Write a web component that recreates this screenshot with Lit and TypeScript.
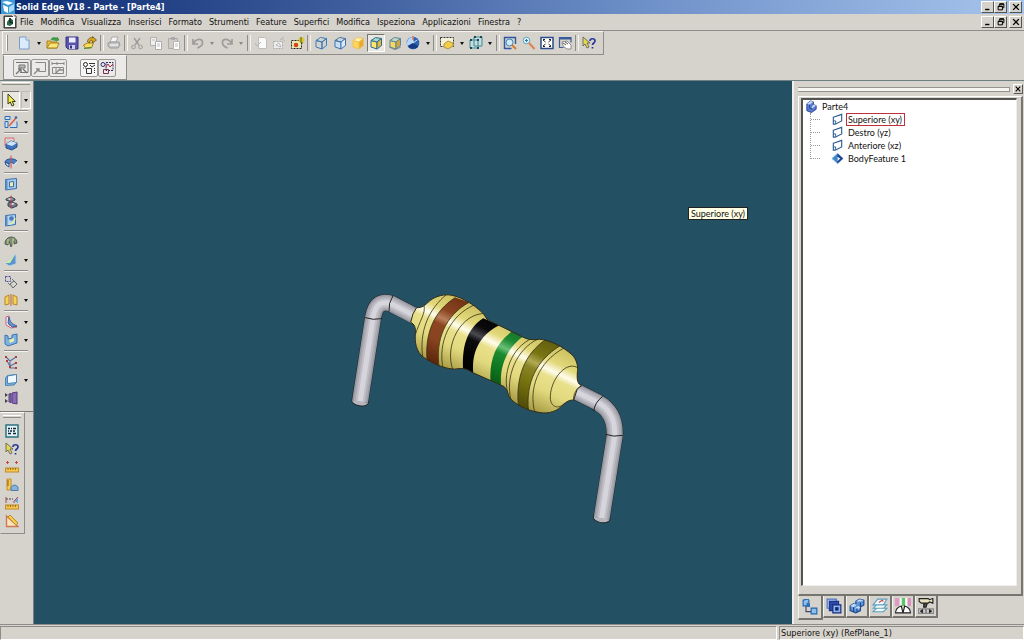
import { LitElement, html, css, svg, nothing } from "lit";
import { customElement, property } from "lit/decorators.js";

const cube = (front: string, top: string, side: string, line: string) => svg`
  <path d="M2 4.5 8 6v7L2 11z" fill=${front} stroke=${line}/>
  <path d="M2 4.5 6.500 1.500 12.500 2.500 8 6z" fill=${top} stroke=${line}/>
  <path d="M8 6l4.500-3.500v7L8 13z" fill=${side} stroke=${line}/>`;
const arrowHelp = svg`
  <path d="M1 1v9l2-2 2 4 2-1-2-4h3z" fill="#e3d94f" stroke="#555" stroke-width=".8"/>
  <path d="M8 5c0-3 5-3 5 0 0 2-2.500 2-2.500 4M10.500 11v1.500" fill="none" stroke="#28389a" stroke-width="1.700"/>`;
const ruler = (y: number) => svg`
  <rect x=".5" y=${y} width="13" height="4" fill="#f6c94c" stroke="#c28a28"/>
  <path d=${`M3 ${y}v2M5.500 ${y}v2M8 ${y}v2M10.500 ${y}v2`} stroke="#8a5a10" stroke-width=".8"/>`;
const undoPath = "M2 3v5h5M2 8C5 2 12 2 11.500 7c0 3-3 4-5 5";

const ICONS: Record<string, unknown> = {
  app: svg`<rect width="14" height="14" fill="#3c9bd6"/><path d="M1 2l5-1 6 2-5 2zM2 5l5 2v6l-4-2z" fill="#fff"/><path d="M8 7l5-3v6l-5 3z" fill="#a8dcf6"/>`,
  doc: svg`<path d="M1 1h8M1 1v12h12V1h-2" fill="none" stroke="#333"/><path d="M1.500 1.500h11v11h-11z" fill="#fff"/><path d="M1 1.500h9M1.500 1v12M1 12.500h12M12.500 3v10" stroke="#444"/><path d="M4 7l3-4 3 2v4l-3 2-3-1z" fill="#2a6a4a"/><path d="M7 3v4l3 1" stroke="#0c2c1c" fill="none" stroke-width="1.500"/>`,
  new: svg`<path d="M2.500 1h6.500l3 3v9H2.500z" fill="#dcebfb" stroke="#7c9cc8"/><path d="M9 1v3h3" fill="#fff" stroke="#7c9cc8"/>`,
  open: svg`<path d="M1 5h4l1 1h5v6H1z" fill="#e9c53f" stroke="#a8821a"/><path d="M1 12l3-5h9l-2 5z" fill="#fbe47a" stroke="#a8821a"/><path d="M5 4c1-3 4-3 6-1V1l2 3-3 1" fill="#43a047" stroke="#2d7d32" stroke-width=".6"/>`,
  save: svg`<path d="M1 1h12v12H3l-2-2z" fill="#5a55b0" stroke="#37327f"/><rect x="4" y="1.500" width="6.500" height="5" fill="#eef"/><rect x="4" y="9" width="6" height="4" fill="#cfd0ea"/><rect x="5" y="9.500" width="2" height="3" fill="#37327f"/>`,
  import: svg`<path d="M.500 9l4-2h6l-2 5h-6z" fill="#f7dc62" stroke="#a8821a"/><path d="M4.500 6c0-4 4-5 5-4V.500l4 3.500-4 3V5c-2-1-3 0-3 2z" fill="#d9a520" stroke="#6a5410" stroke-width=".8"/><path d="M1 12.500l7-1" stroke="#3c8a3c" stroke-width="1.200"/>`,
  print: svg`<path d="M5 1h6l-2 5H3z" fill="#f6f6f6" stroke="#aaa"/><path d="M1 7l4-1h7l1 3-2 3H3l-2-2z" fill="#c4c4c4" stroke="#9a9a9a"/><path d="M3 9h8" stroke="#fff"/>`,
  cut: svg`<path d="M4 2l5 7M10 2L5 9" stroke="#9a9a9a" stroke-width="1.300"/><circle cx="3.500" cy="11" r="1.800" fill="none" stroke="#9a9a9a"/><circle cx="10.500" cy="11" r="1.800" fill="none" stroke="#9a9a9a"/>`,
  copy: svg`<path d="M1.500 1.500h6v8h-6z" fill="#f0f0f0" stroke="#b0b0b0"/><path d="M6.500 5.500h6v8h-6z" fill="#fff" stroke="#aaa"/><path d="M8 8h3M8 10h3M3 4h3" stroke="#bbb"/>`,
  paste: svg`<path d="M1.500 2.500h9v10h-9z" fill="#d0cdc6" stroke="#aaa"/><path d="M4 1h4v3H4z" fill="#aaa"/><path d="M6.500 5.500h6v8h-6z" fill="#fff" stroke="#b5b5b5"/><path d="M8 8h3M8 10h3" stroke="#bbb"/>`,
  undo: svg`<path d=${undoPath} fill="none" stroke="#9c9c9c" stroke-width="1.700"/>`,
  redo: svg`<path d=${undoPath} transform="matrix(-1 0 0 1 14 0)" fill="none" stroke="#9c9c9c" stroke-width="1.700"/>`,
  props: svg`<path d="M4.500 1.500h6l2 2v9h-8z" fill="#fafafa" stroke="#bcbcbc"/><path d="M1 7l2 3 4-4" fill="none" stroke="#b4b4b4"/>`,
  link: svg`<path d="M1.500 5.500h9v7h-9z" fill="#ececec" stroke="#aaa" stroke-dasharray="2 1"/><path d="M4 9l3-2 2 4zM8 4l4-3M9 2l4 3" fill="#fff" stroke="#b5b5b5"/>`,
  update: svg`<path d="M.5 4.500h10v8H.5z" fill="#ece6b4" stroke="#222" stroke-dasharray="2 1"/><circle cx="5" cy="9" r="2.300" fill="#d2451e"/><circle cx="10.500" cy="4" r="3" fill="#dfc43a"/><path d="M10 1v6h2" stroke="#4d6a1a" fill="none"/>`,
  wire: cube("none", "none", "none", "#3e7cb8"),
  hidden: cube("#c8dcf0", "none", "#dce8f4", "#3e74b0"),
  shade: cube("#ffd65c", "#fff3a8", "#e8a92c", "#efc25a"),
  shadeEdge: cube("#ffe66a", "#a8d8c8", "#e0b840", "#2c6a94"),
  shadow: svg`<path d="M1 11l6 3 6-3" fill="#999" stroke="#999"/>${cube("#f4da60", "#c0dcb8", "#d4a840", "#5f83a2")}`,
  sphere: svg`<circle cx="7" cy="7" r="6.300" fill="#2d64b4"/><path d="M7 1v6L1.500 10A6.300 6.300 0 0 1 7 1z" fill="#b8d6f4"/><path d="M7 7l5.500 3A6.300 6.300 0 0 1 2 10z" fill="#173c86"/><path d="M7 7V1M7 7l4-3" stroke="#dce8f8"/><path d="M7 0v4" stroke="#e04a3a"/>`,
  fence: svg`<path d="M.5 1.500h13v9H.5z" fill="#f4f0d8" stroke="#333" stroke-dasharray="2 1"/><path d="M4 8l4-3 5 2v3l-5 3-4-2z" fill="#f2cf4a" stroke="#b5953c"/>`,
  box3d: svg`<path d="M1 4h8v8H1zM5 1h8v9H5z" fill="#bfe0e6" fill-opacity=".6" stroke="#3b8a94"/><path d="M1 4h2M8 4h2M1 12h2M8 12h2M5 1h2M11 1h2" stroke="#1a4a58" stroke-width="2"/>`,
  zoomArea: svg`<path d="M1 1.500h12M1.500 12.500h7M1.500 1v12M12.500 1v7" stroke="#2f55a4" stroke-width="1.400"/><circle cx="6.500" cy="6.500" r="3.500" fill="#cfeaf6" stroke="#3e86a8"/><path d="M9 9l4 4" stroke="#d97a2a" stroke-width="2"/>`,
  zoom: svg`<circle cx="4.500" cy="4.500" r="3.300" fill="#d8f0fa" stroke="#6aa4c0"/><path d="M3 4.500h3M4.500 3v3" stroke="#2a7a9a"/><path d="M7 7l5.500 6" stroke="#e0824a" stroke-width="2"/>`,
  fit: svg`<rect x="1" y="1.500" width="12" height="11" fill="#fff" stroke="#2c4c8c" stroke-width="1.500"/><path d="M3 4l2.500 2M11 4L8.500 6M3 10l2.500-2M11 10L8.500 8" stroke="#222"/><path d="M3 3.500h2M9 3.500h2M3 10.500h2M9 10.500h2" stroke="#222"/>`,
  pan: svg`<path d="M1 1.500h12v5M1.500 1v10.500h4" fill="none" stroke="#3a5a9a" stroke-width="1.200"/><path d="M1 2.500h12" stroke="#3a5a9a" stroke-width="2"/><path d="M4 6l5-1 4 4v4H9L5 10z" fill="#fff" stroke="#777" stroke-width=".8"/><path d="M5 7l3 2M7 6l3 2" stroke="#555"/>`,
  help: arrowHelp,
  t1: svg`<path d="M1 1.500h12v10H5" fill="none" stroke="#777"/><path d="M4 4h6v3H4z" fill="#bbb" stroke="#777"/><path d="M1 13l5-5M3 8h3v3M8 8l4 4" stroke="#777" stroke-width="1.400" fill="none"/>`,
  t2: svg`<path d="M2.500 1.500h10v9h-6" fill="none" stroke="#888"/><path d="M1 13l5-5M3 8h3v3" stroke="#888" stroke-width="1.400" fill="none"/>`,
  t3: svg`<path d="M1 2.500h12M1 1v3M13 1v3M6 1v3M1.500 6.500h11v6h-11zM5 6v6M9 6v3" fill="none" stroke="#888"/><path d="M5 12l3-3h4" stroke="#888" stroke-width="1.400" fill="none"/>`,
  t4: svg`<circle cx="3.500" cy="3.500" r="2" fill="none" stroke="#222"/><path d="M7 2.500h6M8 4l2 2 3-2M4.500 7.500h5v5h-5z" fill="none" stroke="#333"/><path d="M12.500 7v6M1 7h3" stroke="#333" stroke-dasharray="1 1"/>`,
  t5: svg`<circle cx="3" cy="3.500" r="2" fill="none" stroke="#2a2a7a"/><path d="M6 1.500h7v8H6z" fill="none" stroke="#2a2a5a" stroke-dasharray="2 1"/><path d="M6 6l2-3 2 3 3-3" fill="none" stroke="#b03040"/><path d="M3.500 8.500h5v4h-5z" fill="none" stroke="#7a3050"/>`,
  select: svg`<path d="M4 1v10l2.300-2L8 13l2-1-1.700-3.500h3z" fill="#f3ea50" stroke="#3c3c14"/>`,
  sketch: svg`<path d="M1 1.500h5v3H1zM1 6.500h3v6H1zM6 12.500h7v-6" fill="#c9e0f6" stroke="#2e6cb0"/><path d="M5 11l7-8" stroke="#d85a4a" stroke-width="1.300"/><circle cx="12" cy="2.500" r="1.300" fill="#2e6cb0"/>`,
  protrude: svg`<path d="M1 9V1h9v3" fill="none" stroke="#de6a78"/><path d="M2 7l5-3 6 2v4l-5 3-6-2z" fill="#3f74bc" stroke="#294f8c"/><path d="M2 7l5-3 6 2-5 3z" fill="#cfe4fa"/>`,
  revolve: svg`<path d="M1 7c1-4 10-4 12-1l-3 3c-2-2-4-2-5 0z" fill="#4b80c4" stroke="#27508e"/><path d="M1 7l4 2v3L2 10z" fill="#d8e8fa" stroke="#27508e"/><path d="M10 9l3-3v2l-3 3z" fill="#d8e8fa"/><path d="M7 .5v13" stroke="#d44a50"/>`,
  cutout: svg`<path d="M1.500 2.500l11-1v10l-11 1.500z" fill="#a4c8f0" stroke="#3b6fae"/><path d="M1.500 2.500l2 1v9l-2 .500z" fill="#5c8cc8"/><path d="M5.500 5l4-.5v5l-4 .5z" fill="#f2eea0" stroke="#3b6fae"/>`,
  revcut: svg`<path d="M2 4l5-2 4 2v1l-4 2-5-2zM4 8l4-1 5 2v2l-5 2-4-2z" fill="#6c7888" stroke="#3a4452"/><path d="M3 4l4-1 2 1-3 1zM6 9l3-1 2 1-3 1z" fill="#e8ecf0"/><path d="M7 .5v13" stroke="#c43e44"/>`,
  hole: svg`<path d="M1.500 2.500l10-1v10l-10 1.500z" fill="#b4d4f4" stroke="#3b6fae"/><path d="M1.500 2.500l2 1v9l-2 .500z" fill="#5c8cc8"/><circle cx="7.500" cy="5.500" r="2.300" fill="#4a78b8"/><path d="M5 11c4 0 5-2 6-6" stroke="#e8f09c" fill="none" stroke-width="1.500"/>`,
  round: svg`<path d="M1 9c0-9 12-9 12-1l-3 1V6l-3 6-2-6-1 4z" fill="#7d9180" stroke="#4c5c50"/><path d="M4 9V4M9 10V3" stroke="#e2cf78"/>`,
  draft: svg`<path d="M1 10L12 1v10L5 13z" fill="#5c94cc" stroke="#b8d4ea"/><path d="M1 10L11 2 6 10z" fill="#cfe9a8"/>`,
  pattern: svg`<path d="M1.500 1.500h5v5h-5z" fill="none" stroke="#4a4aa0" stroke-dasharray="2 1"/><path d="M6 9l4-3 3 3-4 4z" fill="#d6d6d0" stroke="#666"/><path d="M8 4l2 2M4 8l2 2" stroke="#777"/>`,
  mirror: svg`<path d="M1 4l4-2v9l-4 1zM9 2l4 2v8l-4-1z" fill="#f6d25a" stroke="#b98420"/><path d="M7 1v12" stroke="#c4602c"/>`,
  rib: svg`<path d="M2 2l3-1v9l8 2-6 1-5-3z" fill="#e6ecf6" stroke="#d06078"/><path d="M5 2c1 5 3 7 8 9l-5 1-4-4z" fill="#6c94cc" stroke="#3a629c"/>`,
  thin: svg`<path d="M1 2l3 1v3l4-1V2l5-1v9l-9 3-3-2z" fill="#7cb2e2" stroke="#3c74ac"/><path d="M5 7l5-2v3l-4 2z" fill="#e8f2a8"/>`,
  curve: svg`<path d="M2 2l4 4 6-4M3 6l3 5 6-3M6 6v7h6" fill="none" stroke="#5a6ea0" stroke-width="1.100"/><path d="M1 2h2M11 2h2M11 8h2M5 12h2M11 13h2M2 6h2" stroke="#b23c3c" stroke-width="2"/>`,
  plane: svg`<path d="M1.500 5l2-2.500 9-1v8L10 12l-8.500.500z" fill="#7fb0d8" stroke="#4c86b8"/><path d="M3.500 3l9-1.500v8l-9 1z" fill="#f0f8ff" stroke="#4c86b8"/>`,
  copyPart: svg`<path d="M8 2l5-1v12l-5-1zM5 3l2-.500v9L5 11z" fill="#8a6ab0" stroke="#553a80"/><path d="M1 2l3 2-3 2zM1 8l3 2-3 2z" fill="#444"/>`,
  grid: svg`<rect x="1" y="1" width="12" height="12" fill="#e4f4f6" stroke="#2d7080" stroke-width="1.500"/><path d="M3 4.500h2M6 4.500h1M8 4.500h3M3 7h1M5 7h2M8 7h2M3 9.500h3M8 9.500h3" stroke="#123" stroke-width="1.500"/>`,
  dist: svg`${ruler(8)}<path d="M1 2.500h3M10 2.500h3M2.500 1v3M11.500 1v3" stroke="#c44"/>`,
  angle: svg`<path d="M2 1h4v9l-1 2H2z" fill="#f6cc50" stroke="#c08c28"/><path d="M2 3h2M2 5h2M2 7h2" stroke="#8a5a10"/><path d="M6 12.500h7V9c-3-3-5-2-7 0z" fill="#88b4dc" stroke="#4a7cae"/>`,
  minDist: svg`${ruler(9)}<path d="M1 3h7" stroke="#444" stroke-dasharray="2 1"/><path d="M1 1v6M13 1L9 5v2" stroke="#b4404c" fill="none"/><path d="M9 5l4-3v5" fill="#6aa4dc"/>`,
  area: svg`<path d="M1.500 2v10.500H13z" fill="#f8e4c0" stroke="#d07850" stroke-width="1.400"/><path d="M5 1l8 8-2 2-8-8z" fill="#f6cc50" stroke="#c08c28"/>`,
  part: svg`<path d="M2 4l4-3 3 1v3l3 1v4l-5 3.500-5-2z" fill="#5a7cd0" stroke="#24408c"/><path d="M2 4l4-3 3 1-4 3zM7 8l2-3 3 1-4 3z" fill="#c8d8f8"/><path d="M5 5v4l3 1" fill="none" stroke="#24408c"/>`,
  refplane: svg`<path d="M2.500 4.500l9-3v7l-7 3.500h-2z" fill="#fff" stroke="#2c5a92" stroke-width="1.200"/><path d="M2.500 8.500h2.500v3" fill="none" stroke="#2c5a92"/>`,
  body: svg`<path d="M1 7l6-5.500L13 7l-6 5.500z" fill="#3f86c8" stroke="#86b4de"/><path d="M7 1.500V12.500L13 7z" fill="#1c3f92"/><path d="M7 5l3 2-3 3z" fill="#e8f2fc"/>`,
  tabTree: svg`<path d="M3.500 5v6H9" fill="none" stroke="#446"/><path d="M1 1l4-1 1 1v5H1zM8 8h5v5H8z" fill="#8cc0ee" stroke="#2464a8"/><path d="M4 3l3 1v3H4z" fill="#2f6fb8"/>`,
  tabLib: svg`<path d="M1 1h8v8H1z" fill="#a8c4ec" stroke="#5474b8"/><path d="M3 3h8v8H3z" fill="#2c48a4" stroke="#1a3490"/><path d="M6 6h7v7H6z" fill="#8eb2ec" stroke="#14287c"/><path d="M8 8h3v3H8z" fill="#102474"/>`,
  tabFam: svg`<path d="M1 7l3-2 2 1V3l3-2 4 1v4l-3 2v3l-4 2-5-2z" fill="#5e94d8" stroke="#1e488e"/><path d="M1 7l3-2 3 1-3 2zM6 3l3-2 4 1-3 1zM5 9l3-2 2 1-2 2z" fill="#c0dcfa"/><path d="M4 8v4M10 4v4M7 9v3" stroke="#1e488e"/>`,
  tabLayer: svg`<path d="M1 12l3-3h9l-3 3zM1 9l3-3h9l-3 3zM1 6l4-5h8l-3 5z" fill="#f4fafc" stroke="#5ea0c0"/><path d="M6 4l3-2 1 1" stroke="#c64a4a" fill="none"/>`,
  tabSensor: svg`<path d="M0 0h4v7H0z" fill="#e09ac4"/><path d="M4 0h3v7H4z" fill="#e8f6e8"/><path d="M6 0h3v7H6z" fill="#5cc46c"/><path d="M9 0h2v7H9z" fill="#fff"/><path d="M11 0h3v7h-3z" fill="#dc90bc"/><path d="M.500 13c0-3 2-5 5-6l1.500 6zM13.500 13c0-3-2-5-5-6L7 13z" fill="#fff" stroke="#222"/>`,
  tabPlay: svg`<path d="M1 .500h8l1 1 3-1v4l-3-1-1 1H3L1 3z" fill="#e8e0bc" stroke="#222"/><path d="M5 5h3l-1 3H5z" fill="#554" stroke="#222"/><path d="M.5 9.500h13v4H.5z" fill="#ccc" stroke="#888"/><path d="M4 10v3l-2-1.500zM10 10v3l2-1.500zM7 10v3" fill="#111" stroke="#111" stroke-width=".6"/>`,
  min: svg`<path d="M3 10.500h6" stroke="#000" stroke-width="2"/>`,
  restore: svg`<path d="M5 3h6v5H9M5 3v2M3 6h6v5H3z" fill="none" stroke="#000" stroke-width="1.400"/><path d="M5 2.500h6M3 6h6" stroke="#000" stroke-width="1.800"/>`,
  close: svg`<path d="M3 3l8 8M11 3l-8 8" stroke="#000" stroke-width="1.900"/>`,
};

@customElement("ui-icon")
class UiIcon extends LitElement {
  static styles = css`
    :host { display: block; width: 14px; height: 14px; flex: none; }
    svg { display: block; width: 100%; height: 100%; }
  `;
  @property() name = "";
  render() {
    return html`<svg viewBox="0 0 14 14" aria-hidden="true">${ICONS[this.name] ?? nothing}</svg>`;
  }
}

@customElement("resistor-view")
class ResistorView extends LitElement {
  static styles = css`
    :host { display: block; }
    svg { display: block; width: 100%; height: 100%; }
    .lead { fill: none; stroke-linejoin: round; }
    .l1 { stroke: #23282c; stroke-width: 17px; }
    .l2 { stroke: #98979f; stroke-width: 16px; }
    .l3 { stroke: #adacb4; stroke-width: 13px; }
    .l4 { stroke: #c0bfc7; stroke-width: 9px; }
    .l5 { stroke: #d6d5dc; stroke-width: 5px; }
    .ring { fill: none; stroke: #3c3818; stroke-width: 2.500px; }
    .seam { fill: none; stroke: #222; stroke-width: 1px; }
  `;
  private lead(d: string) {
    return svg`${[1, 2, 3, 4, 5].map((n) => svg`<path class=${`lead l${n}`} d=${d}/>`)}`;
  }
  private shade(id: string, stops: string[]) {
    return svg`<linearGradient id=${id} gradientUnits="userSpaceOnUse" x1="330" y1="60" x2="215" y2="300">
      ${stops.map((c, i) => svg`<stop offset=${[0.1, 0.36, 0.46, 0.53, 0.7, 0.95][i]} stop-color=${c}/>`)}
    </linearGradient>`;
  }
  render() {
    const body = "M32 110 39 85 50 66C66 68 76 58 90 45 110 30 135 25 155 29 190 36 222 58 246 80 258 90 256 100 268 105L370 155C385 163 400 164 420 161 450 164 490 183 516 207 532 222 536 245 533 262 531 285 535 297 546 301L533 310 522 344C505 343 496 353 485 363 465 383 435 386 412 380 380 374 350 358 334 342 322 330 326 314 312 303L215 260C200 249 185 247 165 251 135 251 95 233 70 215 48 198 44 170 46 145 48 125 43 116 32 110Z";
    return html`
      <svg viewBox="34 80 758 544" role="img" aria-label="Parte4">
        <defs>
          ${this.shade("skin", ["#c4b656", "#e2d87a", "#fffdee", "#e9e08c", "#e2d97e", "#a99c45"])}
          ${this.shade("brown", ["#6a2c10", "#8c4420", "#b9805c", "#8c4520", "#8a4422", "#5c260c"])}
          ${this.shade("black", ["#000", "#0a0a0c", "#4a4a50", "#0c0c0e", "#040404", "#000"])}
          ${this.shade("green", ["#0c5a18", "#1e8a34", "#6cc078", "#1c8a30", "#10761f", "#084c12"])}
          ${this.shade("olive", ["#5a560c", "#7a7614", "#b0aa54", "#8a8426", "#77720f", "#524e08"])}
          <clipPath id="body"><path d=${body}/></clipPath>
        </defs>
        <ellipse cx="360" cy="401" rx="8.500" ry="4.500" fill="#b8b7bf" stroke="#23282c" transform="rotate(9 360 401)"/>
        <ellipse cx="602" cy="518" rx="8.500" ry="4.500" fill="#b8b7bf" stroke="#23282c" transform="rotate(9 602 518)"/>
        ${this.lead("M360 401L373 317C375 304 381 300 391 303L416 316")}
        ${this.lead("M574 390L598 402C609 408 616 419 615 436L602 518")}
        <path class="seam" d="M365 317q8 3 17 1M393 295q-5 8-4 16M603 396q-8 6-9 15M606 434q8 3 17 1"/>
        <g transform="translate(400 285) scale(.3333)">
          <path d=${body} fill="url(#skin)"/>
          <g clip-path="url(#body)">
            <path d="M166 36C105 75 72 140 82 235L118 248C105 165 135 90 208 50Z" fill="url(#brown)"/>
            <path d="M250 98C200 130 185 185 190 256L221 270C213 205 235 150 300 118Z" fill="url(#black)"/>
            <path d="M336 138C285 175 268 225 272 292L304 306C298 240 322 185 374 150Z" fill="url(#green)"/>
            <path d="M438 162C375 205 347 275 356 362L386 376C378 290 410 225 482 180Z" fill="url(#olive)"/>
            <path class="ring" d="M142 25C85 70 56 140 69 220M166 36C105 75 72 140 82 235M208 50C135 90 105 165 118 248M223 58C150 90 112 170 130 252M258 84C185 80 130 180 160 256M72 60C78 82 58 108 47 145"/>
            <path class="ring" d="M398 158C335 185 305 265 326 332M416 160C350 190 315 275 334 346M438 162C375 205 347 275 356 362M482 180C410 225 378 290 386 376M492 188C415 230 385 310 406 384M533 246C495 225 448 290 452 342 456 370 482 370 496 352M546 301C530 308 520 328 522 344"/>
          </g>
          <path d=${body} fill="none" stroke="#2b2a18" stroke-width="3"/>
        </g>
      </svg>`;
  }
}

type Tool = { icon: string; label: string; menu?: boolean; off?: boolean; on?: boolean };
const t = (icon: string, label: string, flags = ""): Tool => ({
  icon, label, menu: flags.includes("m"), off: flags.includes("d"), on: flags.includes("p"),
});

const MENUS = ["File", "Modifica", "Visualizza", "Inserisci", "Formato", "Strumenti", "Feature", "Superfici", "Modifica", "Ispeziona", "Applicazioni", "Finestra", "?"];
const MAIN: Tool[][] = [
  [t("new", "Nuovo", "m"), t("open", "Apri"), t("save", "Salva"), t("import", "Importa")],
  [t("print", "Stampa", "d")],
  [t("cut", "Taglia", "d"), t("copy", "Copia", "d"), t("paste", "Incolla", "d")],
  [t("undo", "Annulla", "md"), t("redo", "Ripeti", "md")],
  [t("props", "Proprietà", "d"), t("link", "Collegamenti", "d"), t("update", "Aggiorna")],
  [t("wire", "Wireframe"), t("hidden", "Spigoli nascosti"), t("shade", "Ombreggiato"), t("shadeEdge", "Ombreggiato con spigoli", "p"), t("shadow", "Ombra"), t("sphere", "Viste", "m")],
  [t("fence", "Selezione", "m"), t("box3d", "Vista comune", "m")],
  [t("zoomArea", "Zoom area"), t("zoom", "Zoom"), t("fit", "Adatta"), t("pan", "Panoramica")],
  [t("help", "Guida rapida")],
];
const SIDE: Tool[][] = [
  [t("select", "Seleziona", "mp")],
  [t("sketch", "Schizzo", "m")],
  [t("protrude", "Protrusione"), t("revolve", "Rivoluzione", "m")],
  [t("cutout", "Scavo"), t("revcut", "Scavo di rivoluzione", "m"), t("hole", "Foro", "m")],
  [t("round", "Raccordo"), t("draft", "Sformo", "m")],
  [t("pattern", "Serie", "m"), t("mirror", "Specchio", "m")],
  [t("rib", "Nervatura", "m"), t("thin", "Spessore", "m")],
  [t("curve", "Curva"), t("plane", "Piano", "m"), t("copyPart", "Copia parte")],
];
const MEASURE = [t("grid", "Variabili"), t("help", "Guida"), t("dist", "Distanza"), t("angle", "Angolo"), t("minDist", "Distanza minima"), t("area", "Area")];
const TREE = [["refplane", "Superiore (xy)"], ["refplane", "Destro (yz)"], ["refplane", "Anteriore (xz)"], ["body", "BodyFeature 1"]];
const TABS = [["tabTree", "EdgeBar"], ["tabLib", "Libreria"], ["tabFam", "Famiglia"], ["tabLayer", "Livelli"], ["tabSensor", "Sensori"], ["tabPlay", "Riproduzione"]];

@customElement("app-root")
class AppRoot extends LitElement {
  static styles = css`
    :host {
      display: flex; flex-direction: column; height: 100vh; box-sizing: border-box; overflow: hidden;
      background: #d6d3cc; color: #111;
      font: 9px/12px "DejaVu Sans Condensed", "DejaVu Sans", sans-serif;
    }
    * { box-sizing: border-box; }
    button { font: inherit; color: inherit; border: 0; background: none; padding: 0; margin: 0; display: flex; align-items: center; justify-content: center; }
    ul { list-style: none; margin: 0; padding: 0; }
    .title { display: flex; align-items: center; height: 14px; flex: none; padding: 0 2px 0 1px; gap: 1px; color: #fff; background: linear-gradient(90deg, #0c2a72, #3f5f9e 35%, #6d8fc8 62%, #a6c4ec); }
    .title h1 { flex: 1; margin: 0; font: bold 9px/14px "DejaVu Sans Condensed", sans-serif; }
    .menubar { display: flex; align-items: center; height: 17px; flex: none; padding: 0 2px 0 3px; border-bottom: 1px solid #8e8c88; }
    .menus { display: flex; flex: 1; gap: 1px; }
    .menus button { padding: 0 3px; line-height: 16px; }
    .winbtns { display: flex; }
    .winbtns button, .x { width: 13px; height: 12px; background: #d6d3cc; border: 1px solid; border-color: #fff #555 #555 #fff; }
    .winbtns button:last-child { margin-left: 2px; }
    .winbtns ui-icon { width: 10px; height: 10px; }
    .bar { display: flex; align-items: center; align-self: flex-start; flex: none; height: 24px; border: 1px solid; border-color: #f6f5f2 #8e8c88 #8e8c88 #f6f5f2; }
    .main { width: 602px; max-width: 100%; margin-left: 2px; padding: 0 5px 0 3px; justify-content: space-between; }
    .grip { width: 2px; height: 16px; border-left: 1px solid #fff; border-right: 1px solid #8e8c88; margin-right: 7px; }
    .sep { width: 5px; height: 16px; display: flex; justify-content: center; }
    .sep::before { content: ""; width: 2px; border-left: 1px solid #8e8c88; border-right: 1px solid #f4f3f0; }
    .tool { width: 18px; height: 18px; flex: none; }
    .tool.on { background: #e9e7e2; border: 1px solid; border-color: #77756f #fff #fff #77756f; }
    .drop { width: 10px; height: 18px; flex: none; }
    .drop::before { content: ""; border: 2px solid transparent; border-top: 3px solid #111; border-bottom: 0; }
    .drop:disabled::before { border-top-color: #8b8985; }
    .ribbon { background: #ebeae9; margin-left: 3px; height: 25px; padding: 0 9px; width: 124px; border-left-color: #8e8c88; }
    .ribbon .tool { border: 1px solid #9a9895; border-radius: 2px; }
    .ribbon .tool.on { background: #f7f7f7; border-color: #9a9895; }
    .ribbon .gap { width: 13px; }
    .work { flex: 1; min-height: 0; display: flex; border-top: 1px solid #6f8084; }
    .left { width: 34px; flex: none; border-right: 1px solid #7a7f80; }
    .side { display: flex; flex-direction: column; padding: 1px 3px 4px 2px; border-bottom: 1px solid #77756f; }
    .hgrip { height: 3px; margin: 0 0 6px; border-top: 1px solid #fff; border-bottom: 1px solid #8e8c88; }
    .row { display: flex; }
    .row .drop { margin-left: 1px; }
    .row.on .drop { border: 1px solid; border-color: #bbb #fff #fff #bbb; }
    .hsep { height: 2px; margin: 1px 2px; border-top: 1px solid #8e8c88; border-bottom: 1px solid #f4f3f0; }
    .measure { width: 25px; padding: 2px 3px 3px 2px; border: 1px solid; border-color: #fff #8e8c88 #8e8c88 transparent; }
    .measure .hgrip { margin: 0 0 4px; }
    .canvas { flex: 1; min-width: 0; position: relative; background: #245064; }
    resistor-view { height: 100%; }
    .tip { position: absolute; left: 654px; top: 126px; padding: 0 2px; height: 13px; background: #ffffe6; border: 1px solid #222; white-space: nowrap; }
    .tip, .tree { font: 9px/11px Lato, "Liberation Sans", sans-serif; }
    .edge { width: 232px; flex: none; display: flex; flex-direction: column; padding: 1px 1px 4px 4px; border-left: 2px solid #f0efec; }
    .head { display: flex; align-items: center; gap: 3px; height: 14px; flex: none; }
    .head .lines { flex: 1; height: 5px; border: 1px solid #96948f; border-left: 0; background: #f6f5f2; }
    .x { width: 10px; height: 10px; }
    .x ui-icon { width: 8px; height: 8px; }
    .frame { flex: 1; min-height: 0; display: flex; padding: 1px 4px 8px 2px; border: 1px solid; border-width: 1px 2px 2px 1px; border-color: #fff #77756f #77756f #fff; }
    .tree { flex: 1; background: #fff; border: 1px solid; border-width: 2px 1px 1px 2px; border-color: #55534f #eee #eee #55534f; padding: 0 2px; }
    .node { display: flex; align-items: center; height: 13px; gap: 2px; }
    .node ui-icon { width: 13px; height: 13px; }
    .node span { padding: 0 2px 0 1px; border: 1px solid transparent; line-height: 11px; }
    .node span.hot { border-color: #c0303a; }
    .kids { margin-left: 5px; border-left: 1px dotted #999; height: 46px; }
    .kids .node::before { content: ""; width: 9px; border-top: 1px dotted #999; margin-right: 9px; }
    .tabs { display: flex; flex: none; height: 24px; }
    .tabs button { width: 23px; height: 22px; border-right: 2px solid #77756f; border-bottom: 2px solid #77756f; border-left: 1px solid #f4f3f0; }
    .tabs button.on { height: 24px; width: 25px; }
    .tabs ui-icon { width: 16px; height: 16px; }
    .status { display: flex; flex: none; height: 16px; gap: 2px; padding-top: 1px; border-top: 1px solid #8e8c88; }
    .pane { border: 1px solid; border-color: #8e8c88 #fff #fff #8e8c88; padding: 0 1px; line-height: 13px; }
    .pane.wide { flex: 1; }
    .pane.info { width: 245px; }
  `;

  private tool(x: Tool) {
    return html`<button class="tool ${x.on ? "on" : ""}" aria-label=${x.label} ?disabled=${x.off}><ui-icon name=${x.icon}></ui-icon></button>${
      x.menu ? html`<button class="drop" aria-label=${`${x.label}: opzioni`} ?disabled=${x.off}></button>` : nothing}`;
  }
  private winButtons() {
    return html`<div class="winbtns">
      <button aria-label="Riduci a icona"><ui-icon name="min"></ui-icon></button>
      <button aria-label="Ripristina"><ui-icon name="restore"></ui-icon></button>
      <button aria-label="Chiudi"><ui-icon name="close"></ui-icon></button>
    </div>`;
  }
  render() {
    return html`
      <header class="title"><ui-icon name="app"></ui-icon><h1>Solid Edge V18 - Parte - [Parte4]</h1>${this.winButtons()}</header>
      <nav class="menubar"><ui-icon name="doc"></ui-icon>
        <div class="menus">${MENUS.map((m) => html`<button>${m}</button>`)}</div>${this.winButtons()}
      </nav>
      <div class="bar main" role="toolbar" aria-label="Principale">
        <div class="grip"></div>
        ${MAIN.map((g, i) => html`${i ? html`<div class="sep"></div>` : nothing}${g.map((x) => this.tool(x))}`)}
      </div>
      <div class="bar ribbon" role="toolbar" aria-label="Selezione">
        ${this.tool(t("t1", "Opzioni", "d"))}${this.tool(t("t2", "Deseleziona", "d"))}${this.tool(t("t3", "Accetta", "d"))}
        <div class="gap"></div>
        ${this.tool(t("t4", "Interno", "p"))}${this.tool(t("t5", "Sovrapposto"))}
      </div>
      <div class="work">
        <div class="left">
          <div class="side" role="toolbar" aria-label="Feature">
            <div class="hgrip"></div>
            ${SIDE.map((g, i) => html`${i ? html`<div class="hsep"></div>` : nothing}${g.map((x) => html`<div class="row ${x.on ? "on" : ""}">${this.tool(x)}</div>`)}`)}
          </div>
          <div class="measure" role="toolbar" aria-label="Misura">
            <div class="hgrip"></div>
            ${MEASURE.map((x) => this.tool(x))}
          </div>
        </div>
        <main class="canvas"><resistor-view></resistor-view><div class="tip" role="tooltip">Superiore (xy)</div></main>
        <aside class="edge">
          <div class="head"><div class="lines"></div><button class="x" aria-label="Chiudi"><ui-icon name="close"></ui-icon></button></div>
          <div class="frame"><div class="tree">
            <div class="node"><ui-icon name="part"></ui-icon><span>Parte4</span></div>
            <ul class="kids">${TREE.map(([i, n], k) => html`<li class="node"><ui-icon name=${i}></ui-icon><span class=${k ? "" : "hot"}>${n}</span></li>`)}</ul>
          </div></div>
          <div class="tabs" role="tablist">${TABS.map(([i, n], k) => html`<button role="tab" class=${k ? "" : "on"} aria-label=${n} aria-selected=${k === 0}><ui-icon name=${i}></ui-icon></button>`)}</div>
        </aside>
      </div>
      <footer class="status"><div class="pane wide"></div><div class="pane info">Superiore (xy) (RefPlane_1)</div></footer>`;
  }
}
